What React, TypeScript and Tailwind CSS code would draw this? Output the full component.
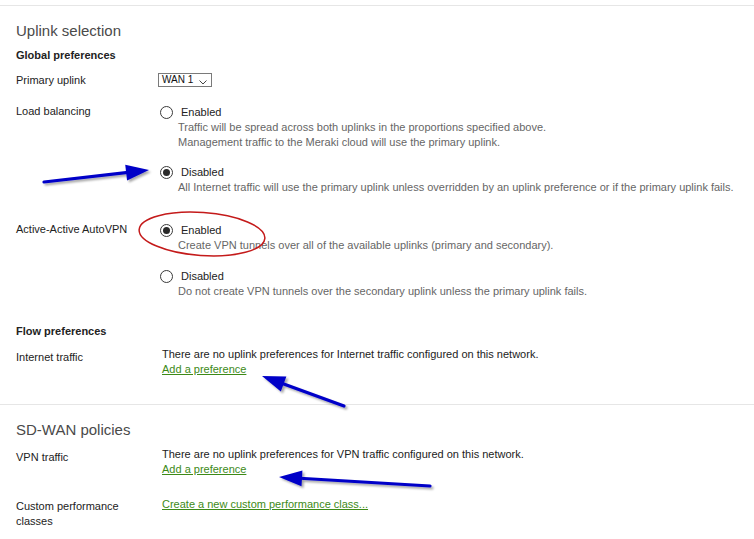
import React from "react"

function Radio({ checked }: { checked?: boolean }) {
  return (
    <span className="ml-[2px] flex h-[13px] w-[13px] shrink-0 items-center justify-center rounded-full border border-[#3a3a3a] bg-white">
      {checked && <span className="h-[7px] w-[7px] rounded-full bg-[#2a2a2a]" />}
    </span>
  )
}

function Option({ label, checked, lines }: { label: string; checked?: boolean; lines: string[] }) {
  return (
    <div>
      <div className="flex h-[16px] items-center">
        <Radio checked={checked} />
        <span className="ml-[8px] text-[#222]">{label}</span>
      </div>
      {lines.map((l) => (
        <div key={l} className="pl-[20px] text-[#666]">
          {l}
        </div>
      ))}
    </div>
  )
}

function Row({ label, children, className = "", labelClass = "" }: { label: React.ReactNode; children: React.ReactNode; className?: string; labelClass?: string }) {
  return (
    <div className={"grid grid-cols-[142px_1fr] " + className}>
      <div className={"text-[#222] " + labelClass}>{label}</div>
      <div>{children}</div>
    </div>
  )
}

function Link({ children }: { children: React.ReactNode }) {
  return <a className="text-[#3d8a17] underline underline-offset-[1px] cursor-pointer">{children}</a>
}

function Arrow({ tip, tail }: { tip: [number, number]; tail: [number, number] }) {
  const dx = tail[0] - tip[0]
  const dy = tail[1] - tip[1]
  const len = Math.hypot(dx, dy)
  const ux = dx / len
  const uy = dy / len
  const hl = 23
  const hw = 8
  const bx = tip[0] + ux * hl
  const by = tip[1] + uy * hl
  const p1 = `${bx - uy * hw},${by + ux * hw}`
  const p2 = `${bx + uy * hw},${by - ux * hw}`
  return (
    <g filter="url(#shadow)">
      <line x1={bx - ux * 2} y1={by - uy * 2} x2={tail[0]} y2={tail[1]} stroke="#0000c8" strokeWidth="3.2" strokeLinecap="round" />
      <polygon points={`${tip[0]},${tip[1]} ${p1} ${p2}`} fill="#0000c8" />
    </g>
  )
}

export default function App() {
  return (
    <div className="relative h-[539px] w-[754px] overflow-hidden bg-white font-['Liberation_Sans',Arial,sans-serif] text-[11px] leading-[15px]">
      <div className="mt-[5px] border-t border-[#e6e6e6]" />

      <div className="pl-[16px]">
        <h2 className="mt-[15px] text-[15px] leading-[20px] text-[#4a4a4a]">Uplink selection</h2>
        <div className="mt-[7px] font-bold text-[#222]">Global preferences</div>

        <Row label="Primary uplink" className="mt-[10px]">
          <div className="relative flex h-[14px] w-[54px] items-center border border-[#7a7a7a] pl-[3px] text-[10px] leading-[12px] text-[#111]">
            WAN 1
            <svg className="absolute right-[4px] top-[6px]" width="8" height="5" viewBox="0 0 8 5">
              <path d="M0.5 0.5 L4 4 L7.5 0.5" fill="none" stroke="#444" strokeWidth="1" />
            </svg>
          </div>
        </Row>

        <Row label="Load balancing" className="mt-[16px]">
          <Option
            label="Enabled"
            lines={[
              "Traffic will be spread across both uplinks in the proportions specified above.",
              "Management traffic to the Meraki cloud will use the primary uplink.",
            ]}
          />
          <div className="mt-[14px]">
            <Option
              label="Disabled"
              checked
              lines={["All Internet traffic will use the primary uplink unless overridden by an uplink preference or if the primary uplink fails."]}
            />
          </div>
        </Row>

        <Row label="Active-Active AutoVPN" className="mt-[27px]">
          <Option label="Enabled" checked lines={["Create VPN tunnels over all of the available uplinks (primary and secondary)."]} />
          <div className="mt-[15px]">
            <Option label="Disabled" lines={["Do not create VPN tunnels over the secondary uplink unless the primary uplink fails."]} />
          </div>
        </Row>

        <div className="mt-[25px] font-bold text-[#222]">Flow preferences</div>

        <Row label="Internet traffic" className="mt-[8px]" labelClass="pt-[3px]">
          <div className="pl-[4px]">
            <div className="text-[#222]">There are no uplink preferences for Internet traffic configured on this network.</div>
            <Link>Add a preference</Link>
          </div>
        </Row>
      </div>

      <div className="mt-[27px] border-t border-[#e6e6e6]" />

      <div className="pl-[16px]">
        <h2 className="mt-[15px] text-[15px] leading-[20px] text-[#4a4a4a]">SD-WAN policies</h2>

        <Row label="VPN traffic" className="mt-[7px]" labelClass="pt-[3px]">
          <div className="pl-[4px]">
            <div className="text-[#222]">There are no uplink preferences for VPN traffic configured on this network.</div>
            <Link>Add a preference</Link>
          </div>
        </Row>

        <Row label={<span className="block w-[115px]">Custom performance classes</span>} className="mt-[20px]" labelClass="pt-[2px]">
          <div className="pl-[4px]">
            <Link>Create a new custom performance class...</Link>
          </div>
        </Row>
      </div>

      <svg className="pointer-events-none absolute left-0 top-0" width="754" height="539">
        <defs>
          <filter id="shadow" x="-20%" y="-50%" width="140%" height="200%">
            <feDropShadow dx="2" dy="2" stdDeviation="1.2" floodColor="#000" floodOpacity="0.35" />
          </filter>
        </defs>
        <Arrow tip={[149, 170]} tail={[44, 182]} />
        <Arrow tip={[262, 376]} tail={[344, 406]} />
        <Arrow tip={[279, 477]} tail={[430, 486]} />
        <ellipse cx="202" cy="234" rx="63" ry="21.5" transform="rotate(4 202 234)" fill="none" stroke="#c41a1a" strokeWidth="1.5" />
      </svg>
    </div>
  )
}
